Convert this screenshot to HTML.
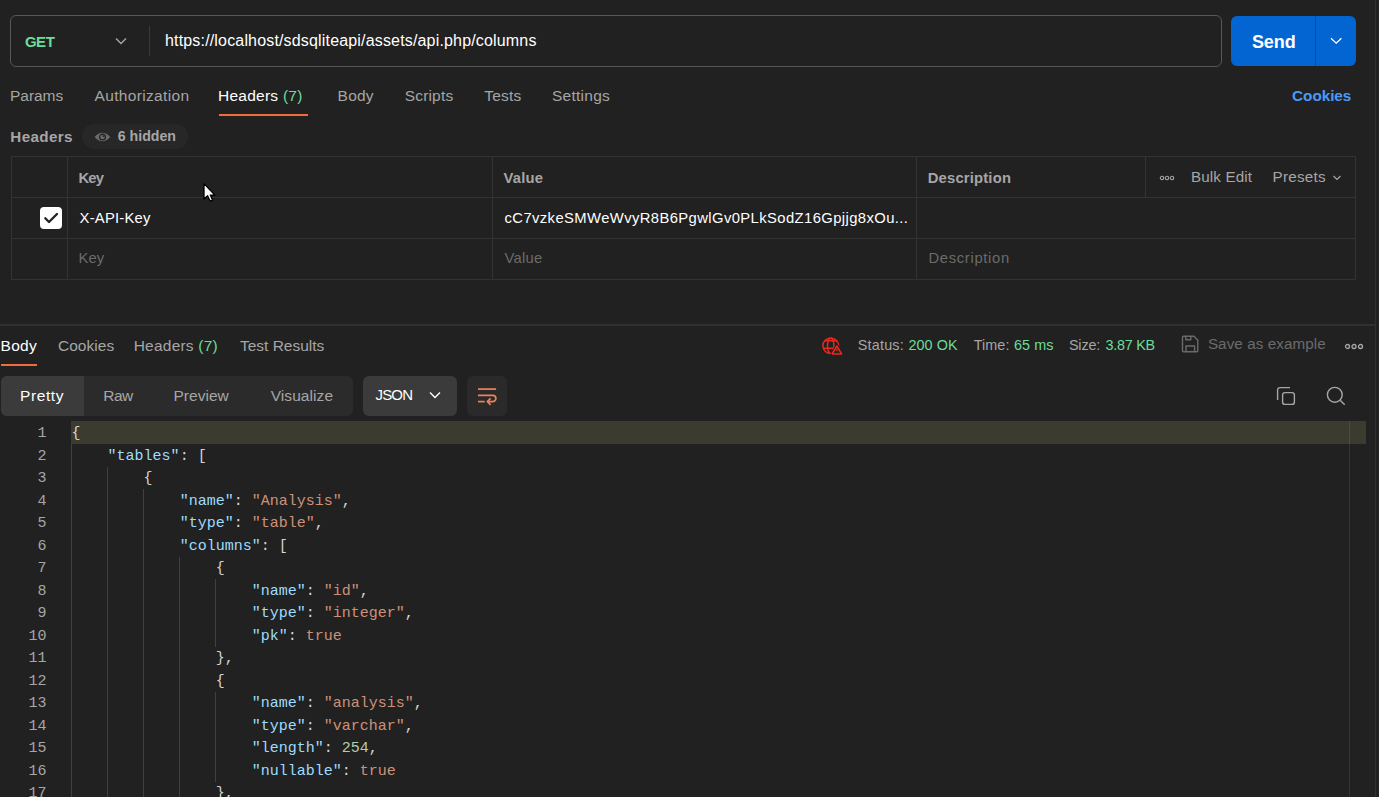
<!DOCTYPE html>
<html><head><meta charset="utf-8">
<style>
html,body{margin:0;padding:0;}
body{width:1379px;height:797px;overflow:hidden;background:#212121;position:relative;font-family:"Liberation Sans",sans-serif;color:#a6a6a6;}
.a{position:absolute;white-space:nowrap;line-height:1;}
.b{position:absolute;box-sizing:border-box;}
.w{color:#ffffff}
.g{color:#6bdd9a}
.ph{color:#6b6b6b}
.lk{color:#4c9af7}
.bd{font-weight:bold}
.cp{color:#d4d4d4}.ck{color:#9cdcfe}.cs{color:#ce9178}.cn{color:#b5cea8}.ct{color:#ce9178}
</style></head><body>

<!-- URL bar -->
<div class="b" style="left:10px;top:15px;width:1212px;height:52px;border:1.5px solid #575757;border-radius:6px;"></div>
<svg class="b" style="left:113px;top:35px" width="16" height="12" viewBox="0 0 16 12"><path d="M3 3.5 L8 8.5 L13 3.5" fill="none" stroke="#a6a6a6" stroke-width="1.4"/></svg>
<div class="b" style="left:149px;top:26px;width:1px;height:30px;background:#3a3a3a"></div>

<!-- Send -->
<div class="b" style="left:1231px;top:16px;width:125px;height:50px;background:#0265d2;border-radius:6px;"></div>
<div class="b" style="left:1315px;top:16px;width:1px;height:50px;background:#0150a8"></div>
<svg class="b" style="left:1328px;top:34px" width="16" height="12" viewBox="0 0 16 12"><path d="M3 4.2 L8.2 9.2 L13.4 4.2" fill="none" stroke="#ffffff" stroke-width="1.3"/></svg>

<!-- right panel line -->
<div class="b" style="left:1375px;top:0;width:1px;height:797px;background:#303030"></div>

<!-- request tabs -->
<div class="b" style="left:219px;top:114px;width:89px;height:2px;background:#f26b3a"></div>

<!-- Headers label + pill -->
<div class="b" style="left:82px;top:124px;width:106px;height:24.5px;background:#272727;border-radius:12.25px;"></div>
<svg class="b" style="left:90px;top:126px" width="26" height="22" viewBox="0 0 26 22"><path d="M4.6 11 Q12.4 2.6 20.2 11 Q12.4 19.6 4.6 11 Z" fill="#6b6b6b"/><circle cx="12.5" cy="11" r="2.9" fill="none" stroke="#222222" stroke-width="1.2"/><path d="M12.6 11 V9 A2 2 0 0 1 14.6 11 Z" fill="#2e2e2e"/></svg>

<!-- table -->
<div class="b" style="left:11px;top:156px;width:1345px;height:124px;border:1px solid #333333;"></div>
<div class="b" style="left:11px;top:197px;width:1345px;height:1px;background:#333333"></div>
<div class="b" style="left:11px;top:238px;width:1345px;height:1px;background:#333333"></div>
<div class="b" style="left:67px;top:156px;width:1px;height:124px;background:#333333"></div>
<div class="b" style="left:492px;top:156px;width:1px;height:124px;background:#333333"></div>
<div class="b" style="left:916px;top:156px;width:1px;height:124px;background:#333333"></div>
<div class="b" style="left:1145px;top:156px;width:1px;height:41px;background:#333333"></div>

<svg class="b" style="left:1158.5px;top:174px" width="16" height="8" viewBox="0 0 16 8"><circle cx="3" cy="4" r="1.7" fill="none" stroke="#a6a6a6" stroke-width="1.1"/><circle cx="8" cy="4" r="1.7" fill="none" stroke="#a6a6a6" stroke-width="1.1"/><circle cx="13" cy="4" r="1.7" fill="none" stroke="#a6a6a6" stroke-width="1.1"/></svg>
<svg class="b" style="left:1330.5px;top:173px" width="12" height="10" viewBox="0 0 12 10"><path d="M2.5 3 L6 6.5 L9.5 3" fill="none" stroke="#a6a6a6" stroke-width="1.2"/></svg>

<div class="b" style="left:40px;top:207px;width:21.5px;height:21.5px;background:#ffffff;border-radius:4px;"></div>
<svg class="b" style="left:39.7px;top:206.8px" width="22" height="22" viewBox="0 0 22 22"><path d="M5.3 11.3 L9 15 L17 7" fill="none" stroke="#212121" stroke-width="2.3" stroke-linecap="round" stroke-linejoin="round"/></svg>


<!-- cursor -->
<svg class="b" style="left:200px;top:180px" width="20" height="26" viewBox="0 0 20 26"><path d="M4 3.6 L4 19 L7.6 15.8 L10.2 21.2 L12.6 20.2 L10.3 15.1 L14.8 15.1 Z" fill="#ffffff" stroke="#000000" stroke-width="1.3" stroke-linejoin="round"/></svg>

<!-- divider -->
<div class="b" style="left:0;top:324px;width:1376px;height:2px;background:#303030"></div>

<!-- response tabs -->
<div class="b" style="left:1px;top:364px;width:36px;height:2px;background:#f26b3a"></div>

<!-- status -->
<svg class="b" style="left:818px;top:333px" width="28" height="26" viewBox="0 0 28 26"><g fill="none" stroke="#e8281e" stroke-width="1.5"><circle cx="12.7" cy="12.7" r="7.8"/><ellipse cx="12.7" cy="12.7" rx="3.2" ry="7.8"/><path d="M6.2 7.8 H19.2 M5 15.3 H20.4"/></g><path d="M18.9 9.6 L26.6 23 H11.2 Z" fill="#212121"/><g fill="none" stroke="#e8281e" stroke-width="1.5" stroke-linejoin="round"><path d="M18.9 13 L23.6 21 H14.2 Z"/></g><path d="M18.9 16 V18.3" stroke="#e8281e" stroke-width="1.2"/></svg>
<svg class="b" style="left:1176px;top:330px" width="28" height="28" viewBox="0 0 28 28"><g fill="none" stroke="#6b6b6b" stroke-width="1.4" stroke-linejoin="round"><path d="M7.5 6.2 H18 L21.8 10.2 V20.8 A1 1 0 0 1 20.8 21.8 H7.5 A1 1 0 0 1 6.5 20.8 V7.2 A1 1 0 0 1 7.5 6.2 Z"/><path d="M9.8 6.2 V9.7 H14.8 V6.2"/><path d="M10 21.8 V16 H18.6 V21.8"/></g></svg>
<svg class="b" style="left:1344px;top:341.5px" width="20" height="9" viewBox="0 0 20 9"><g fill="none" stroke="#a6a6a6" stroke-width="1.3"><circle cx="3.5" cy="4.5" r="2"/><circle cx="10" cy="4.5" r="2"/><circle cx="16.5" cy="4.5" r="2"/></g></svg>

<!-- view tabs -->
<div class="b" style="left:1px;top:376px;width:352px;height:40px;background:#2b2b2b;border-radius:6px;"></div>
<div class="b" style="left:1px;top:376px;width:83px;height:40px;background:#3b3b3b;border-radius:6px 0 0 6px;"></div>
<div class="b" style="left:363px;top:376px;width:94px;height:40px;background:#3b3b3b;border-radius:6px;"></div>
<svg class="b" style="left:427px;top:389px" width="16" height="12" viewBox="0 0 16 12"><path d="M3 3.5 L8 8.5 L13 3.5" fill="none" stroke="#ffffff" stroke-width="1.4"/></svg>
<div class="b" style="left:467px;top:376px;width:40px;height:40px;background:#2a2a2a;border-radius:6px;"></div>
<svg class="b" style="left:466px;top:375px" width="42" height="42" viewBox="0 0 42 42"><g fill="none" stroke="#f0805a" stroke-width="1.7"><path d="M12 14.1 H30.1"/><path d="M12 20.3 H26.7 A3.15 3.15 0 0 1 26.7 26.6 H21.6"/><path d="M24.6 23.4 L21.4 26.6 L24.6 29.8"/><path d="M12 26.6 H18.7"/></g></svg>

<svg class="b" style="left:1270px;top:380px" width="30" height="30" viewBox="0 0 30 30"><g fill="none" stroke="#a6a6a6" stroke-width="1.4"><path d="M7.6 20 V10.1 A2.5 2.5 0 0 1 10.1 7.6 H20"/><rect x="12.6" y="12.6" width="11.8" height="11.8" rx="2.5"/></g></svg>
<svg class="b" style="left:1324px;top:384px" width="24" height="24" viewBox="0 0 24 24"><g fill="none" stroke="#a6a6a6" stroke-width="1.4"><circle cx="10.8" cy="10.8" r="7.4"/><path d="M16.2 16.2 L20.7 20.7"/></g></svg>

<!-- code -->
<div class="b" style="left:71px;top:421px;width:1295px;height:23px;background:#3c3b30"></div>
<div class="b" style="left:1349px;top:421px;width:1px;height:376px;background:rgba(255,255,255,0.09)"></div>
<div class="b" style="left:71px;top:444.0px;width:1px;height:353.0px;background:#404040"></div>
<div class="b" style="left:107px;top:466.5px;width:1px;height:330.5px;background:#404040"></div>
<div class="b" style="left:143px;top:489.0px;width:1px;height:308.0px;background:#404040"></div>
<div class="b" style="left:179px;top:556.5px;width:1px;height:240.5px;background:#404040"></div>
<div class="b" style="left:215px;top:579.0px;width:1px;height:67.5px;background:#404040"></div>
<div class="b" style="left:215px;top:691.5px;width:1px;height:90.0px;background:#404040"></div>
<div class="b" style="left:0;top:423px;width:46.5px;text-align:right;font:15px/22.5px 'Liberation Mono',monospace;color:#a6a6a6;white-space:pre">1
2
3
4
5
6
7
8
9
10
11
12
13
14
15
16
17</div>
<div class="b code" style="left:71.6px;top:423px;font:15px/22.5px 'Liberation Mono',monospace;white-space:pre"><span class="cp">{</span>
    <span class="ck">"tables"</span><span class="cp">: [</span>
        <span class="cp">{</span>
            <span class="ck">"name"</span><span class="cp">: </span><span class="cs">"Analysis"</span><span class="cp">,</span>
            <span class="ck">"type"</span><span class="cp">: </span><span class="cs">"table"</span><span class="cp">,</span>
            <span class="ck">"columns"</span><span class="cp">: [</span>
                <span class="cp">{</span>
                    <span class="ck">"name"</span><span class="cp">: </span><span class="cs">"id"</span><span class="cp">,</span>
                    <span class="ck">"type"</span><span class="cp">: </span><span class="cs">"integer"</span><span class="cp">,</span>
                    <span class="ck">"pk"</span><span class="cp">: </span><span class="ct">true</span>
                <span class="cp">},</span>
                <span class="cp">{</span>
                    <span class="ck">"name"</span><span class="cp">: </span><span class="cs">"analysis"</span><span class="cp">,</span>
                    <span class="ck">"type"</span><span class="cp">: </span><span class="cs">"varchar"</span><span class="cp">,</span>
                    <span class="ck">"length"</span><span class="cp">: </span><span class="cn">254</span><span class="cp">,</span>
                    <span class="ck">"nullable"</span><span class="cp">: </span><span class="ct">true</span>
                <span class="cp">},</span></div>
<div class="a bd g" style="left:24.90px;top:34.30px;font-size:15px;letter-spacing:-0.436px;">GET</div>
<div class="a w" style="left:165.00px;top:33.05px;font-size:16px;letter-spacing:0.167px;">https://localhost/sdsqliteapi/assets/api.php/columns</div>
<div class="a bd w" style="left:1251.90px;top:32.76px;font-size:18px;letter-spacing:-0.037px;">Send</div>
<div class="a" style="left:10.10px;top:87.88px;font-size:15.5px;letter-spacing:-0.070px;">Params</div>
<div class="a" style="left:94.50px;top:87.88px;font-size:15.5px;letter-spacing:0.337px;">Authorization</div>
<div class="a w" style="left:218.00px;top:87.88px;font-size:15.5px;letter-spacing:0.252px;">Headers <span class="g">(7)</span></div>
<div class="a" style="left:337.60px;top:87.88px;font-size:15.5px;letter-spacing:0.207px;">Body</div>
<div class="a" style="left:404.70px;top:87.88px;font-size:15.5px;letter-spacing:0.180px;">Scripts</div>
<div class="a" style="left:484.30px;top:87.88px;font-size:15.5px;letter-spacing:0.168px;">Tests</div>
<div class="a" style="left:552.00px;top:87.88px;font-size:15.5px;letter-spacing:0.249px;">Settings</div>
<div class="a bd lk" style="left:1292.10px;top:88.05px;font-size:15.3px;letter-spacing:-0.050px;">Cookies</div>
<div class="a bd" style="left:10.30px;top:129.13px;font-size:15.2px;letter-spacing:0.367px;">Headers</div>
<div class="a bd" style="left:117.80px;top:128.98px;font-size:14.2px;letter-spacing:-0.023px;">6 hidden</div>
<div class="a bd" style="left:78.40px;top:171.07px;font-size:14.8px;letter-spacing:-0.808px;">Key</div>
<div class="a bd" style="left:503.60px;top:171.07px;font-size:14.8px;letter-spacing:0.192px;">Value</div>
<div class="a bd" style="left:927.70px;top:171.07px;font-size:14.8px;letter-spacing:0.184px;">Description</div>
<div class="a" style="left:1191.00px;top:169.13px;font-size:15.2px;letter-spacing:0.136px;">Bulk Edit</div>
<div class="a" style="left:1272.60px;top:169.13px;font-size:15.2px;letter-spacing:0.251px;">Presets</div>
<div class="a w" style="left:79.60px;top:211.07px;font-size:14.8px;letter-spacing:0.216px;">X-API-Key</div>
<div class="a w" style="left:504.50px;top:211.07px;font-size:14.8px;letter-spacing:0.400px;">cC7vzkeSMWeWvyR8B6PgwlGv0PLkSodZ16Gpjjg8xOu...</div>
<div class="a ph" style="left:78.60px;top:251.07px;font-size:14.8px;letter-spacing:0.001px;">Key</div>
<div class="a ph" style="left:504.50px;top:251.07px;font-size:14.8px;letter-spacing:0.246px;">Value</div>
<div class="a ph" style="left:928.40px;top:251.07px;font-size:14.8px;letter-spacing:0.682px;">Description</div>
<div class="a w" style="left:0.50px;top:337.88px;font-size:15.5px;letter-spacing:0.307px;">Body</div>
<div class="a" style="left:57.90px;top:337.88px;font-size:15.5px;letter-spacing:0.042px;">Cookies</div>
<div class="a" style="left:133.70px;top:337.88px;font-size:15.5px;letter-spacing:0.222px;">Headers <span class="g">(7)</span></div>
<div class="a" style="left:240.00px;top:337.88px;font-size:15.5px;letter-spacing:-0.015px;">Test Results</div>
<div class="a" style="left:857.80px;top:337.81px;font-size:14.4px;letter-spacing:0.184px;">Status:</div>
<div class="a g" style="left:908.50px;top:337.81px;font-size:14.4px;letter-spacing:0.040px;">200 OK</div>
<div class="a" style="left:973.70px;top:337.81px;font-size:14.4px;letter-spacing:0.064px;">Time:</div>
<div class="a g" style="left:1014.00px;top:337.81px;font-size:14.4px;letter-spacing:0.052px;">65 ms</div>
<div class="a" style="left:1068.90px;top:337.81px;font-size:14.4px;letter-spacing:-0.149px;">Size:</div>
<div class="a g" style="left:1105.40px;top:337.81px;font-size:14.4px;letter-spacing:-0.234px;">3.87 KB</div>
<div class="a ph" style="left:1207.90px;top:336.13px;font-size:15.2px;letter-spacing:0.096px;">Save as example</div>
<div class="a w" style="left:20.10px;top:387.88px;font-size:15.5px;letter-spacing:0.573px;">Pretty</div>
<div class="a" style="left:103.30px;top:387.88px;font-size:15.5px;letter-spacing:-0.607px;">Raw</div>
<div class="a" style="left:173.40px;top:387.88px;font-size:15.5px;letter-spacing:0.044px;">Preview</div>
<div class="a" style="left:270.70px;top:387.88px;font-size:15.5px;letter-spacing:0.071px;">Visualize</div>
<div class="a w" style="left:375.50px;top:387.30px;font-size:15px;letter-spacing:-0.824px;">JSON</div>
</body></html>
